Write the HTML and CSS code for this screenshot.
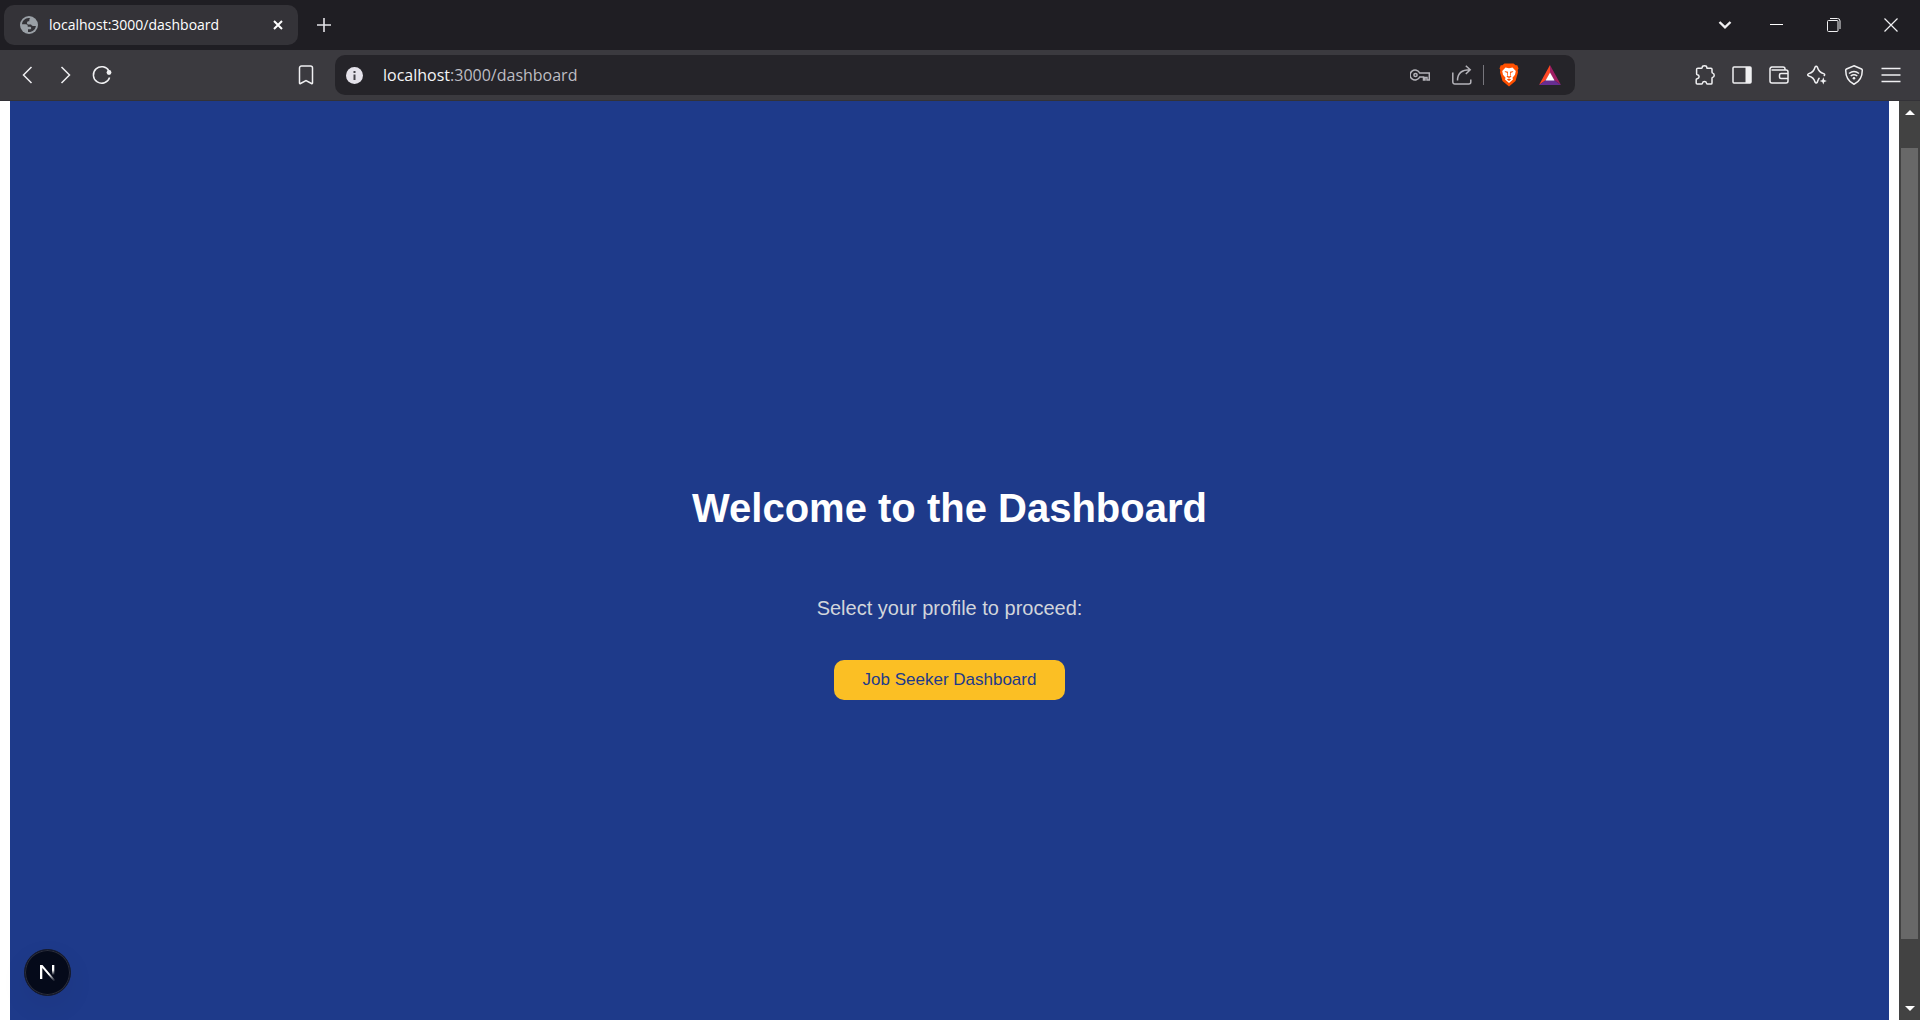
FILE: index.html
```html
<!DOCTYPE html>
<html lang="en">
<head>
<meta charset="utf-8">
<title>localhost:3000/dashboard</title>
<link rel="stylesheet" href="styles.css">
</head>
<body>
<header class="browser">
  <div class="tabstrip">
    <div class="tab">
      <svg class="globe" viewBox="0 0 18 18"><circle cx="9" cy="9" r="9" fill="#9aa0a6"/><path d="M8.500 2C5 2.200 2.300 4.800 2 8.300h3.800c1.300 0 1.900.7 1.900 1.700v.7h2.200c.8 0 1.300.6 1.300 1.300 0 .8-.5 1.300-1.300 1.300H8V15.900c4.200.5 7.400-2.300 7.900-6H13c-.9 0-1.600-.5-1.900-1.300H8.900C7.800 8.600 7 7.800 7 6.900s.7-1.600 1.500-1.600h.8V4.200C9.300 3.200 9.700 2.500 10.300 2.100z" fill="#343338"/></svg>
      <span class="tab-title">localhost:3000/dashboard</span>
      <button class="tab-close" aria-label="Close tab"><svg width="12" height="12" viewBox="0 0 12 12"><path d="M2 2l8 8M10 2l-8 8" stroke="#fff" stroke-width="2"/></svg></button>
    </div>
    <button class="icon-button new-tab" aria-label="New tab"><svg width="14" height="14" viewBox="0 0 14 14"><path d="M7 0v14M0 7h14" stroke="#e4e3e8" stroke-width="1.600"/></svg></button>
    <div class="window-controls">
      <button class="chevron" aria-label="Search tabs"><svg width="14" height="8" viewBox="0 0 14 8"><path d="M1.500 1l5.500 5.300L12.500 1" stroke="#f0f0f2" stroke-width="2.400" fill="none"/></svg></button>
      <button aria-label="Minimize"><svg width="14" height="14" viewBox="0 0 14 14"><path d="M0 6.500h13" stroke="#fff"/></svg></button>
      <button aria-label="Restore"><svg width="14" height="14" viewBox="0 0 14 14" fill="none" stroke="#f0f0f2"><rect x=".5" y="2.500" width="10.500" height="11" rx="1"/><path d="M3 .5h7.500a2.500 2.500 0 0 1 2.500 2.500v8"/></svg></button>
      <button aria-label="Close"><svg width="14" height="14" viewBox="0 0 14 14"><path d="M.5.5l13 13M13.500.5l-13 13" stroke="#f0f0f2" stroke-width="1.200"/></svg></button>
    </div>
  </div>
  <div class="toolbar">
    <nav class="nav">
      <button class="icon-button" aria-label="Back"><svg viewBox="0 0 20 20"><path d="M13.500 2L5.500 10l8 8"/></svg></button>
      <button class="icon-button" aria-label="Forward"><svg viewBox="0 0 20 20"><path d="M6.500 2l8 8-8 8"/></svg></button>
      <button class="icon-button" aria-label="Reload"><svg viewBox="0 0 20 20"><path d="M17.600 12.500a8.300 8.300 0 1 1-.6-6.500"/><circle cx="17" cy="7.500" r="2.400" fill="#f0f0f2" stroke="none"/></svg></button>
      <button class="icon-button bookmark" aria-label="Bookmark"><svg viewBox="0 0 20 20"><path d="M3.500 18V3a2 2 0 0 1 2-2h9a2 2 0 0 1 2 2v15q0 1-1 .5L10 15.500l-5.500 3q-1 .5-1-.5z"/></svg></button>
    </nav>
    <div class="address">
      <button class="info" aria-label="Site information"><svg width="17" height="17" viewBox="0 0 17 17"><circle cx="8.500" cy="8.500" r="8.500" fill="#e4e2ea"/><path d="M8.500 4v2M8.500 7.500v5.500" stroke="#444349" stroke-width="2"/></svg></button>
      <a class="url" href="#"><span class="host">localhost</span>:3000/dashboard</a>
      <button class="icon-button muted key" aria-label="Passwords"><svg width="20" height="20" viewBox="0 0 20 20"><path d="M9.700 8A5 5 0 1 0 9.700 12h3.800v3h1.500v-2.500h2V15h2.300V8z"/><circle cx="5.500" cy="10" r="1.600"/></svg></button>
      <button class="icon-button muted share" aria-label="Share"><svg viewBox="0 0 20 20"><path d="M.8 7.500V17a2 2 0 0 0 2 2h14a2 2 0 0 0 2-2v-2.500M5.500 15.500C5.500 8.500 9.500 4.800 18 4.800M13.800.8L18.200 4.800l-4.400 4.200"/></svg></button>
      <span class="divider"></span>
      <button class="icon-button brave" aria-label="Shields"><svg width="20" height="24" viewBox="0 0 20 24"><path d="M5.500.5h9l2.200 1.800h1.600L19.500 5.500 18.700 7 19 9.500 16.500 18 10 23.500 3.500 18 1 9.500 1.300 7 .5 5.500 1.700 2.300h1.600z" fill="#ff5000"/><path d="M6.500 4.500L10 5.200l3.500-.7L16.800 8 16 11.800l-2.500 3 .5 1.700-4 3.500-4-3.500.5-1.700-2.500-3L3.200 8z" fill="#fff"/><path d="M5.500 8l3.500.8-.3 3.700L7.500 13.700 10 15l2.500-1.300-1.200-1.200-.3-3.700 3.500-.8-1.300 1.500-1.400.2.200 2.800L10 13.500l-2-1 .2-2.800L6.800 9.500zM7.800 16.500l2.200-.9 2.200.9L10 18z" fill="#ff5000"/></svg></button>
      <button class="icon-button bat" aria-label="Rewards"><svg width="22" height="20" viewBox="0 0 22 20"><path d="M11 0L0 20l7-5 4-7z" fill="#ff4724"/><path d="M11 0l11 20-7-5-4-7z" fill="#9e1f63"/><path d="M0 20h22l-7-5H7z" fill="#662d91"/><path d="M11 7.500L6.500 15.500h9z" fill="#fff"/></svg></button>
    </div>
    <div class="extensions">
      <button class="icon-button" aria-label="Extensions"><svg viewBox="0 0 20 20"><path d="M3 3.200h3.500c.7 0 .7-.3.700-.7C7.200 1.500 8.200.8 9.500.8s2.300.7 2.300 1.700c0 .4 0 .7.700.7H16c.8 0 1 .4 1 1V7c0 .8.200 1 .7 1.100 1 .3 1.500 1 1.500 2.200s-.7 2.100-1.700 2.200c-.4.100-.5.300-.5.900v4.600c0 .8-.3 1.100-1 1.100h-3.500c-.6 0-.8-.3-.9-.8-.2-1-.9-1.700-2.100-1.700s-1.900.7-2.100 1.700c-.1.500-.3.800-.9.800H2.200c-.8 0-1-.4-1-1v-3.300c0-.7.300-.9.900-1 1.200-.2 2-.9 2-2s-.8-2-1.700-2.100c-.6-.1-.8-.4-.8-1V4.500C1.600 3.600 2 3.200 3 3.200z"/></svg></button>
      <button class="icon-button" aria-label="Sidebar"><svg viewBox="0 0 20 20"><rect x="1" y="2" width="18" height="16" rx="1"/><path d="M13.500 2H19v16h-5.500z" fill="#f0f0f2" stroke="none"/></svg></button>
      <button class="icon-button" aria-label="Wallet"><svg viewBox="0 0 20 20"><path d="M1 4.500V16a2 2 0 0 0 2 2h14a2 2 0 0 0 2-2V7a2 2 0 0 0-2-2H2.500M1 4.500A2.300 2.300 0 0 1 3 2h11a2 2 0 0 1 2 2v1M19 8.500h-7a1.500 1.500 0 0 0-1.500 1.500v2a1.500 1.500 0 0 0 1.500 1.500h7"/></svg></button>
      <button class="icon-button" aria-label="Leo AI"><svg viewBox="0 0 20 20"><path d="M12.500 12.800C11.300 13.700 11 15.500 10.400 17q-1.200 2-2.400 0C7 13.200 5.600 12 1.800 11q-2.200-1.200 0-2.400C5.600 7.500 7 6.100 8 2.200q1.200-2 2.400 0C11.500 6.100 13 7.500 16.700 8.600q2 1.200 0 2.200"/><path d="M16.300 12.200l1 2.800 2.500 1-2.500 1-1 2.600-1-2.600-2.600-1 2.600-1z" fill="#f0f0f2" stroke="none"/></svg></button>
      <button class="icon-button" aria-label="VPN"><svg viewBox="0 0 20 20"><path d="M10 .8L17.500 4q.8.400.8 1.300C18.300 11.500 16 16.500 10 19.300 4 16.500 1.700 11.500 1.700 5.300q0-.9.800-1.300z"/><path d="M5 8.500q5-4 10 0M6.700 11q3.300-2.600 6.600 0"/><circle cx="10" cy="13.300" r="1.300" fill="#f0f0f2" stroke="none"/></svg></button>
      <button class="icon-button" aria-label="Menu"><svg viewBox="0 0 20 20"><path d="M.5 3.500h19M.5 10h19M.5 16.500h19"/></svg></button>
    </div>
  </div>
</header>
<div class="viewport">
  <main class="dashboard">
    <h1 class="heading">Welcome to the Dashboard</h1>
    <p class="lead">Select your profile to proceed:</p>
    <button class="profile-button">Job Seeker Dashboard</button>
    <button class="dev-badge" aria-label="Open Next.js Dev Tools">
      <svg width="16" height="17" viewBox="0 0 16 17" fill="none"><defs><linearGradient id="fade" x1="0" y1="0" x2="0" y2="1"><stop offset=".5" stop-color="#fff"/><stop offset="1" stop-color="#fff" stop-opacity="0"/></linearGradient><linearGradient id="diag" gradientUnits="userSpaceOnUse" x1="9" y1="10" x2="15" y2="17"><stop stop-color="#fff"/><stop offset="1" stop-color="#fff" stop-opacity="0"/></linearGradient></defs><path d="M0 15V1h2.500L15.500 16.500l-1.500 1L2.300 4v11z" fill="url(#diag)"/><path d="M12 1h2.300v10H12z" fill="url(#fade)"/></svg>
    </button>
  </main>
  <div class="scrollbar">
    <button class="arrow up" aria-label="Scroll up"></button>
    <div class="thumb"></div>
    <button class="arrow down" aria-label="Scroll down"></button>
  </div>
</div>
</body>
</html>
```
FILE: styles.css
```css
* { box-sizing: border-box; }

body {
  margin: 0;
  height: 100vh;
  display: flex;
  flex-direction: column;
  overflow: hidden;
  background: #fff;
  font-family: "Liberation Sans", Arial, sans-serif;
}

button {
  margin: 0;
  padding: 0;
  border: 0;
  background: none;
  font: inherit;
}

svg { display: block; }

.browser { font-family: "Open Sans", "Noto Sans", sans-serif; }

.tabstrip {
  display: flex;
  align-items: center;
  height: 50px;
  padding-left: 4px;
  background: #1f1e23;
}

.tab {
  display: flex;
  align-items: center;
  width: 294px;
  height: 40px;
  padding: 0 14px 0 16px;
  border-radius: 10px;
  background: #343338;
}

.globe { width: 18px; height: 18px; }

.tab-title {
  flex: 1;
  margin-left: 11px;
  color: #fff;
  font-size: 14px;
  line-height: 20px;
}

.icon-button {
  display: flex;
  align-items: center;
  justify-content: center;
  width: 37px;
  height: 40px;
  flex: none;
}

.new-tab { margin-left: 7px; }

.window-controls {
  display: flex;
  margin-left: auto;
  padding-right: 1px;
}

.window-controls button {
  display: flex;
  align-items: center;
  justify-content: center;
  width: 57px;
  height: 50px;
}

.window-controls .chevron { width: 46px; }

.toolbar {
  display: flex;
  align-items: center;
  height: 51px;
  border-bottom: 1px solid #333237;
  background: #3b3a3f;
}

.toolbar svg {
  fill: none;
  stroke: #f0f0f2;
  stroke-width: 1.500;
}

.nav svg, .extensions svg, .share svg {
  width: 20px;
  height: 20px;
}

.nav {
  display: flex;
  width: 335px;
  padding: 0 11px 0 9px;
}

.bookmark { margin-left: auto; }

.address {
  display: flex;
  align-items: center;
  flex: 1;
  height: 40px;
  padding: 0 8px 0 11px;
  border-radius: 10px;
  background: #252429;
}

.toolbar .info svg, .toolbar .brave svg, .toolbar .bat svg { stroke: none; }

.toolbar .info path { stroke: #444349; }

.url {
  flex: 1;
  margin-left: 20px;
  color: #bebdc3;
  font-size: 16px;
  line-height: 24px;
  text-decoration: none;
}

.host { color: #f4f4f6; }

.toolbar .muted svg { stroke: #b4b3b9; }

.key, .share { width: 42px; }

.divider {
  width: 1px;
  height: 20px;
  background: #77767c;
}

.brave { width: 49px; }

.bat { width: 34px; }

.extensions {
  display: flex;
  justify-content: space-between;
  width: 345px;
  padding: 0 10px 0 111px;
}

.viewport {
  display: flex;
  flex: 1;
  min-height: 0;
  padding-left: 10px;
}

.dashboard {
  position: relative;
  display: flex;
  flex: 1;
  flex-direction: column;
  align-items: center;
  justify-content: center;
  margin-right: 10px;
  padding-top: 64px;
  background: #1e3a8a;
}

.heading {
  margin: 0 0 66px;
  color: #fff;
  font-size: 40px;
  font-weight: 700;
  line-height: 44px;
}

.lead {
  margin: 0 0 40px;
  color: #d1d5db;
  font-size: 20px;
  line-height: 24px;
}

.profile-button {
  padding: 10px 29px;
  border-radius: 10px;
  background: #fbbf24;
  color: #1e3a8a;
  font-size: 17px;
  line-height: 20px;
}

.dev-badge {
  position: absolute;
  bottom: 24px;
  left: 14px;
  display: flex;
  align-items: center;
  justify-content: center;
  width: 47px;
  height: 47px;
  border: 1px solid #161a2b;
  border-radius: 50%;
  background: #050a1a;
  box-shadow: inset 0 0 0 1px #2a2d3b, 0 10px 30px rgba(0, 0, 0, .06);
}

.scrollbar {
  display: flex;
  flex-direction: column;
  align-items: center;
  width: 21px;
  background: #424242;
}

.arrow {
  display: flex;
  align-items: center;
  justify-content: center;
  width: 21px;
  height: 23px;
}

.arrow::before {
  content: "";
  border: 5px solid transparent;
}

.up::before { border-top: 0; border-bottom-color: #fff; }

.down::before { border-bottom: 0; border-top-color: #fff; }

.thumb {
  flex: 1;
  width: 17px;
  margin: 24px 0 58px;
  background: #686868;
}
```
